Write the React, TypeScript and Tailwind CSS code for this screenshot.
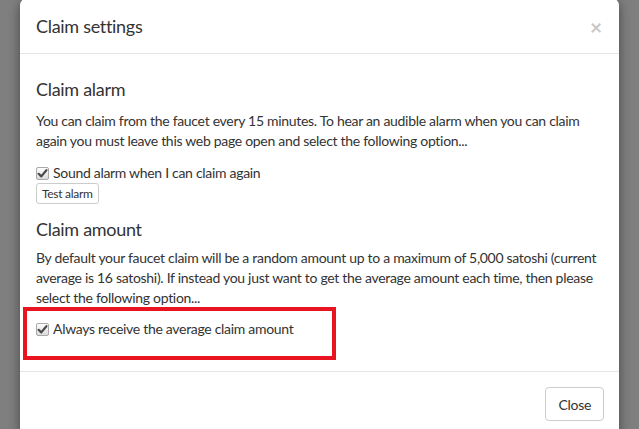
import React from "react";

function Check() {
  return (
    <span className="inline-flex h-[13px] w-[13px] shrink-0 items-center justify-center rounded-[2px] border border-[#a9a9a9] bg-gradient-to-b from-[#fdfdfd] to-[#dcdcdc]">
      <svg width="11" height="11" viewBox="0 0 11 11">
        <path d="M1.6 5.8 L4.3 8.4 L9.4 2.2" fill="none" stroke="#4a4a4a" strokeWidth="2.2" strokeLinecap="round" strokeLinejoin="round" />
      </svg>
    </span>
  );
}

export default function App() {
  return (
    <div
      className="relative h-[429px] w-[639px] overflow-hidden bg-[#7f7f7f] text-[#333] tracking-[-0.3px]"
      style={{ fontFamily: "Lato, 'Liberation Sans', sans-serif" }}
    >
      <div className="mx-[20px] -mt-[1px] flex flex-col rounded-[6px] bg-white shadow-[0_3px_12px_rgba(0,0,0,0.45)]">
        {/* header */}
        <div className="flex h-[55px] items-center justify-between border-b border-[#e5e5e5] pl-[16px] pr-[17px]">
          <h4 className="text-[18px] leading-none">Claim settings</h4>
          <span className="text-[21px] font-bold leading-none text-[#c8c8c8]">×</span>
        </div>

        {/* body */}
        <div className="flex flex-col px-[16px] pt-[22px] pb-[31px] text-[14px] leading-[20px]">
          <h3 className="text-[18px] leading-[26px]">Claim alarm</h3>
          <p className="mt-[9px] whitespace-nowrap">
            You can claim from the faucet every 15 minutes. To hear an audible alarm when you can claim
            <br />
            again you must leave this web page open and select the following option...
          </p>
          <label className="mt-[12px] flex items-center gap-[4px]">
            <Check />
            <span>Sound alarm when I can claim again</span>
          </label>
          <div>
            <button className="rounded-[3px] border border-[#ccc] bg-white px-[5px] text-[12px] leading-[19px] text-[#333]">
              Test alarm
            </button>
          </div>

          <h3 className="mt-[12px] text-[18px] leading-[26px]">Claim amount</h3>
          <p className="mt-[6px] whitespace-nowrap">
            By default your faucet claim will be a random amount up to a maximum of 5,000 satoshi (current
            <br />
            average is 16 satoshi). If instead you just want to get the average amount each time, then please
            <br />
            select the following option...
          </p>
          <label className="mt-[10px] flex h-[22px] items-center gap-[4px]">
            <Check />
            <span>Always receive the average claim amount</span>
          </label>
        </div>

        {/* footer */}
        <div className="flex justify-end border-t border-[#e5e5e5] px-[15px] pt-[15px] pb-[15px]">
          <button className="h-[34px] rounded-[4px] border border-[#ccc] bg-white px-[12px] text-[14px] text-[#333]">
            Close
          </button>
        </div>
      </div>

      {/* red annotation box */}
      <div className="pointer-events-none absolute left-[23px] top-[307px] h-[53px] w-[313px] border-[4px] border-[#e8141f]" />
    </div>
  );
}
